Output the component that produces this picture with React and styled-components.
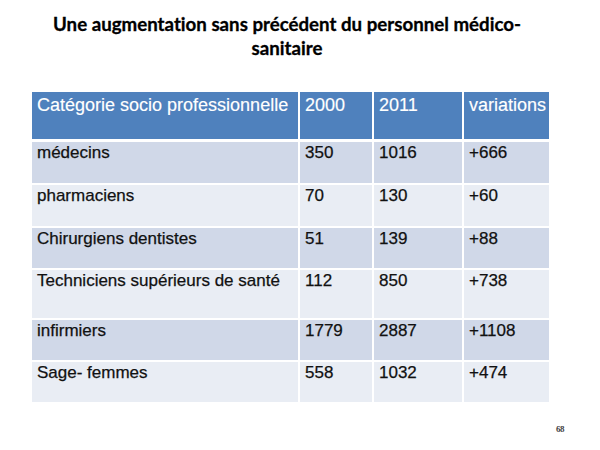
import styled, { createGlobalStyle } from 'styled-components';

const GlobalStyle = createGlobalStyle`
    html, body {
        margin: 0;
        padding: 0;
        background: #ffffff;
    }
`;

const rows = [
    { label: 'médecins', y2000: '350', y2011: '1016', delta: '+666', height: 44 },
    { label: 'pharmaciens', y2000: '70', y2011: '130', delta: '+60', height: 43 },
    { label: 'Chirurgiens dentistes', y2000: '51', y2011: '139', delta: '+88', height: 42 },
    { label: 'Techniciens supérieurs de santé', y2000: '112', y2011: '850', delta: '+738', height: 50 },
    { label: 'infirmiers', y2000: '1779', y2011: '2887', delta: '+1108', height: 42 },
    { label: 'Sage- femmes', y2000: '558', y2011: '1032', delta: '+474', height: 42 },
];

const Slide = styled.div`
    width: 600px;
    height: 450px;
    display: flex;
    flex-direction: column;
    background: #ffffff;
    overflow: hidden;
`;

const Title = styled.h1`
    margin: 0;
    padding: 12px 26px 0 0;
    font-family: Lato, 'Open Sans', sans-serif;
    font-weight: 700;
    font-size: 18.7px;
    line-height: 24px;
    text-align: center;
    color: #000000;
    font-variant-ligatures: none;
    -webkit-text-stroke: 0.3px #000000;
`;

const Table = styled.div`
    margin: 32px 0 0 32px;
    display: grid;
    grid-template-columns: 266px 74px 90px 87px;
    grid-template-rows: ${({ $heights }) => $heights.map((h) => `${h}px`).join(' ')};
    font-family: 'Liberation Sans', Arial, sans-serif;
`;

const Cell = styled.div`
    box-sizing: border-box;
    padding: ${({ $head }) => ($head ? '3px 4px 0 5px' : '1px 4px 0 5px')};
    background: ${({ $head, $odd }) => ($head ? '#4f81bd' : $odd ? '#d0d8e8' : '#e9edf4')};
    color: ${({ $head }) => ($head ? '#ffffff' : '#111111')};
    font-size: ${({ $head }) => ($head ? '18px' : '17px')};
    line-height: 1.15;
    white-space: nowrap;
    -webkit-text-stroke: ${({ $head }) => ($head ? '0.15px #ffffff' : '0.25px #111111')};
    border-left: ${({ $first }) => ($first ? 'none' : '2px solid #ffffff')};
    border-top: ${({ $top }) => ($top ? `${$top}px solid #ffffff` : 'none')};
`;

const Footer = styled.div`
    display: flex;
    justify-content: flex-end;
    padding: 22px 36px 0 0;
`;

const PageNumber = styled.span`
    font-family: 'Liberation Serif', serif;
    font-weight: 700;
    font-size: 9px;
    color: #444444;
    letter-spacing: -0.5px;
`;

const HeaderRow = () => (
    <>
        {['Catégorie socio professionnelle', '2000', '2011', 'variations'].map((text, i) => (
            <Cell key={text} $head $first={i === 0}>
                {text}
            </Cell>
        ))}
    </>
);

const DataRow = ({ row, index }) => {
    const odd = index % 2 === 0;
    const top = index === 0 ? 3 : 2;
    return (
        <>
            <Cell $odd={odd} $first $top={top}>{row.label}</Cell>
            <Cell $odd={odd} $top={top}>{row.y2000}</Cell>
            <Cell $odd={odd} $top={top}>{row.y2011}</Cell>
            <Cell $odd={odd} $top={top}>{row.delta}</Cell>
        </>
    );
};

export default function App() {
    const heights = [47, ...rows.map((r) => r.height)];

    return (
        <>
            <GlobalStyle />
            <Slide>
                <Title>
                    Une augmentation sans précédent du personnel médico-
                    <br />
                    sanitaire
                </Title>
                <Table $heights={heights}>
                    <HeaderRow />
                    {rows.map((row, i) => (
                        <DataRow key={row.label} row={row} index={i} />
                    ))}
                </Table>
                <Footer>
                    <PageNumber>68</PageNumber>
                </Footer>
            </Slide>
        </>
    );
}
